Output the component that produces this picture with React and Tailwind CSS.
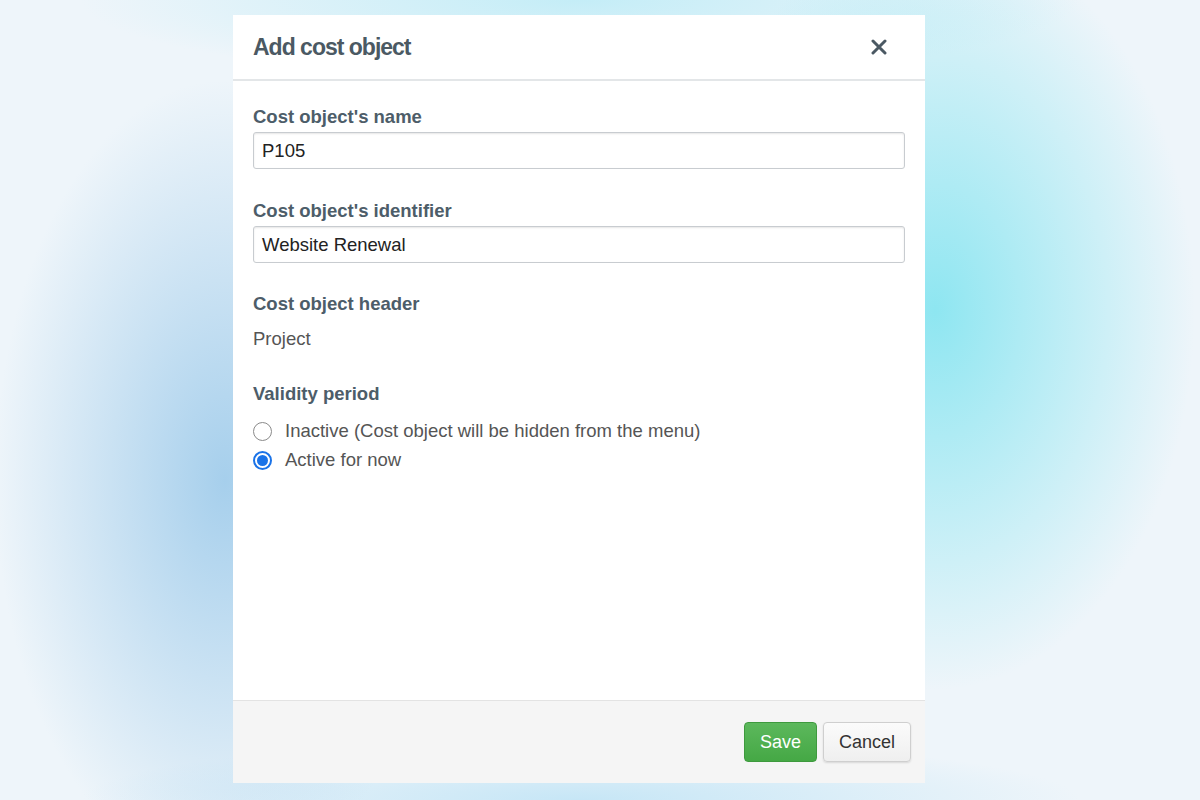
export default function App() {
  return (
    <div
      className="w-[1200px] h-[800px] overflow-hidden flex pl-[233px] pt-[15px] bg-[#eef5fa] bg-[radial-gradient(ellipse_230px_400px_at_225px_480px,#a6cfec_0%,rgba(166,207,236,0)_100%),radial-gradient(ellipse_260px_380px_at_935px_310px,#8ee6f1_0%,rgba(142,230,241,0)_100%),radial-gradient(ellipse_500px_80px_at_580px_0px,#c4edf7_0%,rgba(196,237,247,0)_100%),radial-gradient(ellipse_500px_60px_at_580px_800px,#c6e6f6_0%,rgba(198,230,246,0)_100%)]"
      style={{ fontFamily: '"Liberation Sans", Arial, sans-serif' }}
    >
      <div className="w-[692px] h-[768px] bg-white flex flex-col">
        <div className="h-[66px] flex items-center justify-between pl-5 pr-[38px] border-b-2 border-[#e3e6e8]">
          <h1 className="text-[23px] font-bold text-[#4b5963] tracking-[-1px]">Add cost object</h1>
          <svg width="16" height="16" viewBox="0 0 16 16" className="text-[#4b5963]">
            <path d="M2 2L14 14M14 2L2 14" stroke="currentColor" strokeWidth="3" strokeLinecap="round" />
          </svg>
        </div>

        <div className="flex-1 px-5 pt-[24px] text-[18.5px]">
          <div className="font-bold text-[#4d5d69] leading-[24px]">Cost object's name</div>
          <div className="mt-[3px] h-[37px] border border-[#c8ccd0] rounded-[3px] shadow-[inset_0_1px_2px_rgba(0,0,0,0.1)] flex items-center px-2 text-[#222]">
            P105
          </div>

          <div className="mt-[30px] font-bold text-[#4d5d69] leading-[24px]">Cost object's identifier</div>
          <div className="mt-[3px] h-[37px] border border-[#c8ccd0] rounded-[3px] shadow-[inset_0_1px_2px_rgba(0,0,0,0.1)] flex items-center px-2 text-[#222]">
            Website Renewal
          </div>

          <div className="mt-[29px] font-bold text-[#4d5d69] leading-[24px]">Cost object header</div>
          <div className="mt-[11px] text-[#555] leading-[24px]">Project</div>

          <div className="mt-[31px] font-bold text-[#4d5d69] leading-[24px]">Validity period</div>
          <div className="mt-[13px] flex items-center gap-[13px] leading-[24px] text-[#555]">
            <span className="w-[19px] h-[19px] rounded-full border border-[#8a8a8a] bg-white" />
            <span>Inactive (Cost object will be hidden from the menu)</span>
          </div>
          <div className="mt-[5px] flex items-center gap-[13px] leading-[24px] text-[#555]">
            <span className="w-[19px] h-[19px] rounded-full border-2 border-[#1a73e8] bg-white flex items-center justify-center">
              <span className="w-[11px] h-[11px] rounded-full bg-[#1a73e8]" />
            </span>
            <span>Active for now</span>
          </div>
        </div>

        <div className="h-[83px] bg-[#f5f5f5] border-t border-[#e3e3e3] flex items-center justify-end gap-[6px] pr-[14px]">
          <button className="h-[40px] w-[73px] rounded-[4px] bg-[linear-gradient(#5cb85c,#45a845)] border border-[#3e9a3e] text-white text-[18px]">
            Save
          </button>
          <button className="h-[40px] w-[88px] rounded-[4px] bg-[linear-gradient(#fbfbfb,#efefef)] border border-[#cfcfcf] shadow-[0_1px_2px_rgba(0,0,0,0.12)] text-[#333] text-[18px]">
            Cancel
          </button>
        </div>
      </div>
    </div>
  );
}
